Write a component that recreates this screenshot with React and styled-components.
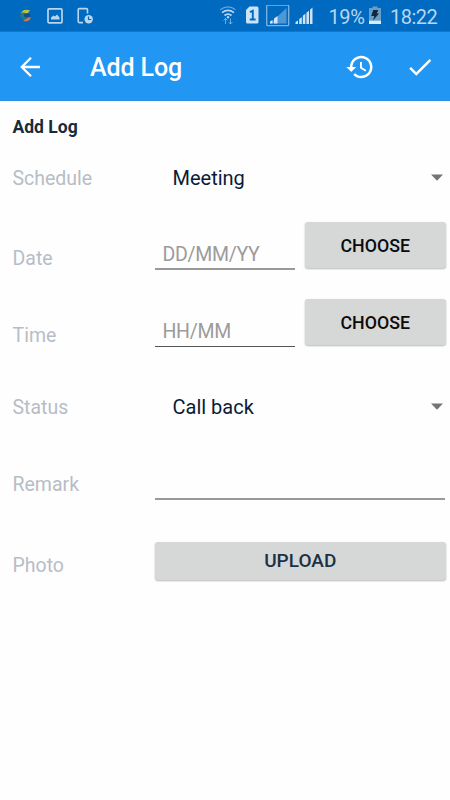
import React from "react";
import styled, { createGlobalStyle } from "styled-components";

const GlobalStyle = createGlobalStyle`
  * { box-sizing: border-box; }
  body { margin: 0; background: #fff; font-family: Roboto, sans-serif; }
`;

const Screen = styled.div`
  width: 450px;
  height: 800px;
  overflow: hidden;
  display: flex;
  flex-direction: column;
  background: #fefefe;
`;

const StatusBar = styled.header`
  height: 32px;
  flex: none;
  display: flex;
  align-items: flex-start;
  padding-left: 19px;
  background: #0069c0;
  border-bottom: 1px solid #0d78d0;
  color: #b9d6ef;
  svg { display: block; flex: none; margin-top: 5px; }
`;

const Spacer = styled.div`
  flex: none;
  width: ${(p) => p.$w}px;
`;

const StatusText = styled.span`
  font-size: 20px;
  line-height: 34px;
  white-space: nowrap;
  letter-spacing: ${(p) => p.$track || 0}px;
`;

const AppBar = styled.nav`
  height: 69px;
  flex: none;
  display: flex;
  align-items: center;
  background: #2196f3;
  border-bottom: 1px solid #2a91e5;
  padding: 1px 15px 0 15px;
  color: #fff;
`;

const IconButton = styled.button`
  width: 30px;
  height: 30px;
  padding: 0;
  border: 0;
  background: none;
  color: inherit;
  margin-left: ${(p) => p.$gap || 0}px;
  svg { display: block; }
`;

const Title = styled.h1`
  flex: 1;
  margin: 0 0 0 45px;
  padding-top: 2px;
  font-size: 25px;
  line-height: 30px;
  font-weight: 500;
  letter-spacing: -0.1px;
`;

const Form = styled.main`
  padding: 14px 5px 0 12px;
`;

const Heading = styled.h2`
  margin: 0;
  padding-left: 0.5px;
  font-size: 17.5px;
  line-height: 24px;
  font-weight: 700;
  color: #172b3b;
`;

const Row = styled.div`
  display: grid;
  grid-template-columns: 143px 1fr;
  height: ${(p) => p.$h}px;
  margin-top: ${(p) => p.$top}px;
`;

const Label = styled.label`
  font-size: 19.5px;
  line-height: 24px;
  padding-top: ${(p) => p.$drop || 1}px;
  padding-left: 0.5px;
  color: #b7bdc5;
`;

const Select = styled.div`
  display: flex;
  justify-content: space-between;
  align-items: center;
  height: 24px;
  padding: 0 2px 0 17.5px;
  font-size: 20px;
  line-height: 24px;
  color: #0b1b36;
  svg { display: block; margin-top: -2px; }
`;

const PickerCell = styled.div`
  display: flex;
  justify-content: space-between;
`;

const Field = styled.div`
  width: ${(p) => p.$w || 140}px;
  height: ${(p) => p.$h}px;
  padding: ${(p) => p.$pad || 0}px 0 0 7.5px;
  border-bottom: ${(p) => (p.$dark ? "1px solid #555" : "2px solid #999")};
  font-size: 19.5px;
  line-height: 24px;
  letter-spacing: -0.3px;
  color: #9b9b9b;
`;

const Button = styled.button`
  width: ${(p) => p.$w}px;
  height: ${(p) => p.$h}px;
  margin: 0 -0.5px 0 0;
  padding: ${(p) => p.$nudge || 0}px 0 0;
  border: 0;
  border-radius: 3px;
  background: #d6d7d7;
  box-shadow: 0 1px 2px rgba(0, 0, 0, 0.28);
  font: 500 18px/24px Roboto, sans-serif;
  font-size: ${(p) => p.$size || 17.8}px;
  color: ${(p) => p.$ink || "#0b0b0b"};
`;

const Caret = () => (
  <svg width="12" height="7" viewBox="0 0 12 7"><path d="M0 .5h12L6 6.7z" fill="#747474" /></svg>
);

const SwirlIcon = () => (
  <svg width="13" height="20" viewBox="0 0 13 20">
    <path d="M2 8.5C3 5 6 3.8 11 5.3L9 8 5 8.5Z" fill="#b9c535" />
    <path d="M5 8.5l6 .5 .3 3L5 11.5Z" fill="#164a96" />
    <path d="M1.3 8c-.5 4 1 6 4 6.5l2-.8C5 12.5 4.5 10.5 5.5 7.5Z" fill="#217d83" />
    <path d="M4 15.8c4 1.8 8-.3 7.5-4L7.5 13.5Z" fill="#c67a4c" />
  </svg>
);

const ImageIcon = () => (
  <svg width="17" height="20" viewBox="0 0 17 20">
    <rect x="1" y="3.8" width="14" height="14" rx="1" fill="none" stroke="currentColor" strokeWidth="1.7" />
    <path d="M4 14.5v-2l2.5-2 1.5 1 2-2 2.5 3v2Z" fill="currentColor" />
  </svg>
);

const DeviceClockIcon = () => (
  <svg width="18" height="20" viewBox="0 0 18 20">
    <path d="M10.5 8.5V4.7Q10.5 3.6 9.4 3.6H2.3Q1.2 3.6 1.2 4.7V16.6Q1.2 17.6 2.3 17.6H6" fill="none" stroke="currentColor" strokeWidth="1.6" />
    <circle cx="11.7" cy="14.3" r="4.2" fill="currentColor" />
    <path d="M11.5 11.5v3h2.8" fill="none" stroke="#0069c0" strokeWidth="1.2" />
  </svg>
);

const WifiIcon = () => (
  <svg width="18" height="21" viewBox="0 0 18 21" fill="none" stroke="currentColor">
    <path d="M1.2 4.7Q9-1.1 16.6 4.7" strokeWidth="1.2" opacity=".55" />
    <path d="M3 7.6q6-4.5 12 0M5.5 10.5q3.5-2.8 7 0" strokeWidth="1.8" />
    <circle cx="9" cy="12.2" r="1.2" fill="currentColor" stroke="none" />
    <path d="M6.5 19v-5.5m-2 2 2-2 2 2M11.5 13.5V19m-2-2 2 2 2-2" strokeWidth="1" opacity=".6" />
  </svg>
);

const SimIcon = () => (
  <svg width="13" height="20" viewBox="0 0 13 20">
    <path d="M3.5 1.5H11q1.5 0 1.5 1.5v14q0 1.5-1.5 1.5H1.5Q0 18.5 0 17V5Z" fill="#cce3f7" />
    <path d="M4 7.2 6.8 5.8V14.5M3.8 14.5h5.8" fill="none" stroke="#0069c0" strokeWidth="1.9" />
  </svg>
);

const BoxedSignalIcon = () => (
  <svg width="24" height="23" viewBox="0 0 24 23">
    <rect x=".7" y=".2" width="22" height="20.5" rx="1" fill="none" stroke="#7eb4e1" strokeWidth="1.3" />
    <path d="M4 18.5 20.5 3v15.5Z" fill="#4d97d5" />
    <path d="M4 18.5v-2l2.5-1.5v3.5ZM8 18.5v-5l3.5-2.5v7.5Z" fill="#d3e7f8" />
  </svg>
);

const SignalIcon = () => (
  <svg width="18" height="20" viewBox="0 0 18 20" fill="#cce2f5">
    <path d="M.5 19v-2L3 15.5V19ZM4.2 19v-5l2.6-1.8V19ZM7.8 19v-8.2l2.6-2V19ZM11.4 19V7.8l2.6-2V19ZM15 19V4.7L17.5 2.5v16.5Z" />
  </svg>
);

const BatteryIcon = () => (
  <svg width="12" height="20" viewBox="0 0 12 20">
    <path d="M3.5 1.5h5V3H12v16H0V3h3.5Z" fill="#679fc9" />
    <path d="M0 15.7h12V19H0Z" fill="#d9eaf8" />
    <path d="M4.2 5h5L7.8 8.5H10L4 15.5 5.3 11H2.2Z" fill="#12283c" />
  </svg>
);

const BackIcon = () => (
  <svg width="30" height="30" viewBox="0 0 30 30" fill="none" stroke="currentColor" strokeWidth="2.3">
    <path d="M25 15H7M16 5.8 6.8 15l9.2 9.2" />
  </svg>
);

const HistoryIcon = () => (
  <svg width="30" height="30" viewBox="0 0 24 24" fill="currentColor">
    <path d="M13 3c-4.97 0-9 4.03-9 9H1l3.89 3.89.07.14L9 12H6c0-3.87 3.13-7 7-7s7 3.13 7 7-3.13 7-7 7c-1.93 0-3.68-.79-4.94-2.06l-1.42 1.42C8.27 19.99 10.51 21 13 21c4.97 0 9-4.03 9-9s-4.03-9-9-9zm-1 5v5l4.28 2.54.72-1.21-3.5-2.08V8H12z" />
  </svg>
);

const CheckIcon = () => (
  <svg width="30" height="30" viewBox="0 0 24 24" fill="currentColor">
    <path d="M9 16.17 4.83 12l-1.42 1.41L9 19 21 7l-1.41-1.41z" />
  </svg>
);

export default function App() {
  return (
    <>
      <GlobalStyle />
      <Screen>
        <StatusBar>
          <SwirlIcon />
          <Spacer $w={15} />
          <ImageIcon />
          <Spacer $w={12.5} />
          <DeviceClockIcon />
          <Spacer $w={124.5} />
          <WifiIcon />
          <Spacer $w={9} />
          <SimIcon />
          <Spacer $w={6.5} />
          <BoxedSignalIcon />
          <Spacer $w={5} />
          <SignalIcon />
          <Spacer $w={16} />
          <StatusText $track={-0.4}>19%</StatusText>
          <Spacer $w={4.5} />
          <BatteryIcon />
          <Spacer $w={9} />
          <StatusText $track={-0.5}>18:22</StatusText>
        </StatusBar>
        <AppBar>
          <IconButton aria-label="Back"><BackIcon /></IconButton>
          <Title>Add Log</Title>
          <IconButton aria-label="History"><HistoryIcon /></IconButton>
          <IconButton aria-label="Save" $gap={30}><CheckIcon /></IconButton>
        </AppBar>
        <Form>
          <Heading>Add Log</Heading>
          <Row $top={27} $h={24}>
            <Label>Schedule</Label>
            <Select>Meeting<Caret /></Select>
          </Row>
          <Row $top={32} $h={48}>
            <Label $drop={25}>Date</Label>
            <PickerCell>
              <Field $h={48} $pad={21}>DD/MM/YY</Field>
              <Button $w={140.5} $h={46} $nudge={1}>CHOOSE</Button>
            </PickerCell>
          </Row>
          <Row $top={29} $h={48}>
            <Label $drop={25}>Time</Label>
            <PickerCell>
              <Field $h={48} $pad={21} $dark>HH/MM</Field>
              <Button $w={140.5} $h={46} $nudge={1}>CHOOSE</Button>
            </PickerCell>
          </Row>
          <Row $top={48} $h={24}>
            <Label>Status</Label>
            <Select>Call back<Caret /></Select>
          </Row>
          <Row $top={53} $h={28}>
            <Label>Remark</Label>
            <Field $w={290} $h={28} />
          </Row>
          <Row $top={42} $h={38}>
            <Label $drop={12}>Photo</Label>
            <Button $w={290.5} $h={38} $size={19} $ink="#1b3145">UPLOAD</Button>
          </Row>
        </Form>
      </Screen>
    </>
  );
}
